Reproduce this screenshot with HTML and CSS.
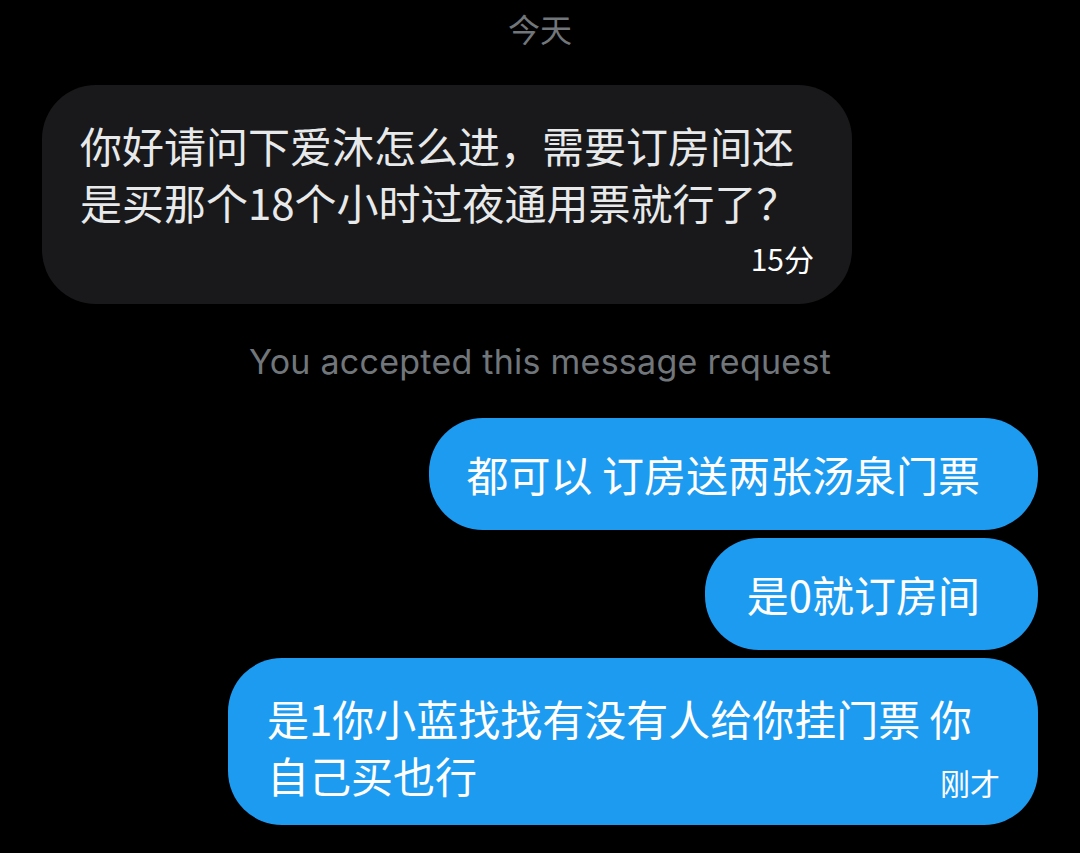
FILE: index.html
```html
<!DOCTYPE html>
<html lang="zh-CN">
<head>
<meta charset="utf-8">
<title>Chat</title>
<link rel="stylesheet" href="styles.css">
</head>
<body>
<div class="chat">
  <div class="date">今天</div>
  <div class="bubble in">
    <div class="text">你好请问下爱沐怎么进，需要订房间还<br>是买那个18个小时过夜通用票就行了？</div>
    <div class="time-row"><span class="time">15分</span></div>
  </div>
  <div class="notice">You accepted this message request</div>
  <div class="bubble out">都可以 订房送两张汤泉门票</div>
  <div class="bubble out narrow">是0就订房间</div>
  <div class="bubble out wide">
    <div class="text">是1你小蓝找找有没有人给你挂门票 你</div>
    <div class="last-row"><span class="text">自己买也行</span><span class="time">刚才</span></div>
  </div>
</div>
</body>
</html>
```
FILE: styles.css
```css
html, body {
  margin: 0;
  background: #000;
}
body {
  width: 1080px;
  height: 853px;
  overflow: hidden;
  font-family: "Noto Sans CJK SC", sans-serif;
}
.chat {
  display: flex;
  flex-direction: column;
  padding: 0 42px;
}
.date {
  align-self: center;
  color: #71767b;
  font-size: 32px;
  line-height: 56px;
  margin-bottom: 29px;
}
.bubble {
  font-size: 42px;
  line-height: 57px;
  border-radius: 54px;
  box-sizing: border-box;
}
.text {
  white-space: nowrap;
}
.in {
  align-self: flex-start;
  width: 810px;
  background: #19191b;
  color: #e7e9ea;
  padding: 31px 38px 28px;
}
.time-row {
  display: flex;
  justify-content: flex-end;
  margin-top: 10px;
}
.time {
  font-size: 30px;
  line-height: 36px;
  color: #fff;
}
.notice {
  align-self: center;
  color: #71767b;
  font-family: Inter, Roboto, "Noto Sans CJK SC", sans-serif;
  font-size: 34px;
  letter-spacing: 0.25px;
  line-height: 40px;
  margin: 38px 0 36px;
}
.out {
  align-self: flex-end;
  background: #1d9bf0;
  color: #fff;
  padding: 27px 58px 28px 38px;
}
.out.narrow {
  padding-left: 42px;
}
.out + .out {
  margin-top: 8px;
}
.out.wide {
  width: 810px;
  padding: 31px 38px 22px 39px;
}
.last-row {
  display: flex;
  justify-content: space-between;
  align-items: flex-end;
}
.last-row .time {
  margin-bottom: 3px;
}
```
